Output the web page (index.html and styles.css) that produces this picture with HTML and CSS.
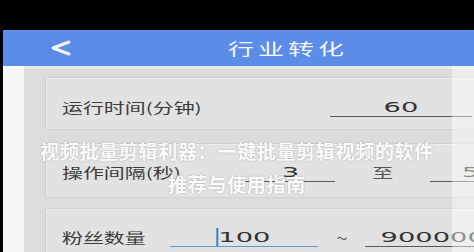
FILE: index.html
```html
<!DOCTYPE html>
<html lang="zh">
<head>
<meta charset="utf-8">
<link rel="stylesheet" href="styles.css">
</head>
<body>
<div class="frame">
  <header class="header">
    <svg class="back" width="22" height="16" viewBox="0 0 22 16"><polyline points="20,2 4,8 20,14" fill="none" stroke="#f2f5fb" stroke-width="3" stroke-linecap="round" stroke-linejoin="round"/></svg>
    <span class="title"><span class="sx-title">行业转化</span></span>
  </header>
  <main class="content">
    <section class="card card-1">
      <div class="row">
        <div class="label l1"><span class="sx">运行时间(分钟)</span></div>
        <div class="field f-60"><span class="val">60</span></div>
      </div>
    </section>
    <section class="card card-2">
      <div class="row">
        <div class="label l2"><span class="sx">操作间隔(秒)</span></div>
        <div class="field f-3"><span class="val">3</span></div>
        <div class="sep s-zhi"><span class="sx-c">至</span></div>
        <div class="field f-5"><span class="val">5</span></div>
      </div>
    </section>
    <section class="card card-3">
      <div class="row">
        <div class="label l3"><span class="sx">粉丝数量</span></div>
        <div class="field f-100 active"><span class="val"><i class="cursor"></i>100</span></div>
        <div class="sep s-tilde"><span class="sx-c">~</span></div>
        <div class="field f-900"><span class="val">900000</span></div>
      </div>
    </section>
  </main>
  <div class="edge edge-left"></div>
  <div class="edge edge-right"></div>
</div>
<div class="caption">
  <p>视频批量剪辑利器：一键批量剪辑视频的软件</p>
  <p>推荐与使用指南</p>
</div>
</body>
</html>
```
FILE: styles.css
```css
* { box-sizing: border-box; }
html, body { margin: 0; padding: 0; }
body {
  width: 474px;
  height: 252px;
  overflow: hidden;
  background: #000;
  font-family: "Noto Sans CJK SC", "Noto Sans", sans-serif;
  position: relative;
}
.frame {
  position: relative;
  margin: 30px 0 0 3px;
  height: 222px;
  background: #dcdcdc;
  overflow: hidden;
}
.header {
  height: 36px;
  background: #5b8ce8;
  display: flex;
  align-items: center;
}
.back {
  margin-left: 46px;
  display: block;
}
.title {
  margin-left: 157px;
  color: #f4f6fb;
  font-size: 16px;
  line-height: 20px;
}
.sx-title {
  display: inline-block;
  letter-spacing: 2.5px;
  transform: scaleX(1.62);
  transform-origin: left center;
}
.content {
  border-top: 3px solid #eaeaea;
  padding: 8px 0 0 42px;
  display: flex;
  flex-direction: column;
}
.card {
  width: 470px;
  background: #e2e2e2;
  border: 1px solid #d1d1d1;
  border-right: none;
  border-left-color: #cdcdcd;
  box-shadow: inset 1px 1px 0 #ececec;
  padding: 20px 0 0 16px;
}
.card-1 { height: 53px; margin-bottom: 13px; }
.card-2 { height: 55px; margin-bottom: 10px; padding-top: 19px; }
.card-3 { height: 60px; padding-top: 19px; }
.row {
  display: flex;
  align-items: flex-end;
  height: 19px;
}
.label {
  flex: none;
  height: 19px;
  line-height: 19px;
  font-size: 13.5px;
  color: #3c3c3c;
}
.sx {
  display: inline-block;
  transform: scaleX(1.55);
  transform-origin: left center;
}
.l1 { width: 268px; }
.l2 { width: 183px; }
.l3 { width: 108px; }
.field {
  flex: none;
  height: 19px;
  border-bottom: 1px solid #595959;
  display: flex;
  justify-content: center;
  align-items: center;
}
.field.active { border-bottom: 1.5px solid #5d95cf; }
.f-60 { width: 142px; }
.f-3 { width: 90px; }
.f-5 { width: 80px; }
.f-100 { width: 148px; }
.f-900 { width: 136px; }
.val {
  position: relative;
  display: inline-block;
  font-family: "DejaVu Sans", sans-serif;
  font-size: 14px;
  line-height: 17px;
  color: #333;
  transform: scaleX(1.95);
  transform-origin: center;
}
.cursor {
  position: absolute;
  left: -1px;
  top: -1px;
  width: 1.2px;
  height: 18px;
  background: #3f78c4;
}
.sep {
  flex: none;
  height: 19px;
  line-height: 19px;
  text-align: center;
  color: #555;
  font-size: 13.5px;
}
.sx-c {
  display: inline-block;
  transform: scaleX(1.55);
}
.s-zhi { width: 95px; }
.s-tilde { width: 47px; }
.edge {
  position: absolute;
  top: 36px;
  bottom: 0;
}
.edge-left {
  left: 0;
  width: 21px;
  background: rgba(255, 255, 255, 0.78);
}
.edge-right {
  left: 449px;
  right: 0;
  background: rgba(255, 255, 255, 0.45);
}
.caption {
  position: absolute;
  left: 0;
  top: 134px;
  width: 474px;
  text-align: center;
  color: #fbfbfb;
  font-size: 19px;
  font-weight: bold;
  letter-spacing: 0.7px;
  line-height: 33px;
  text-shadow: 0 0 2px rgba(0, 0, 0, 0.25);
}
.caption p { margin: 0; }
```
